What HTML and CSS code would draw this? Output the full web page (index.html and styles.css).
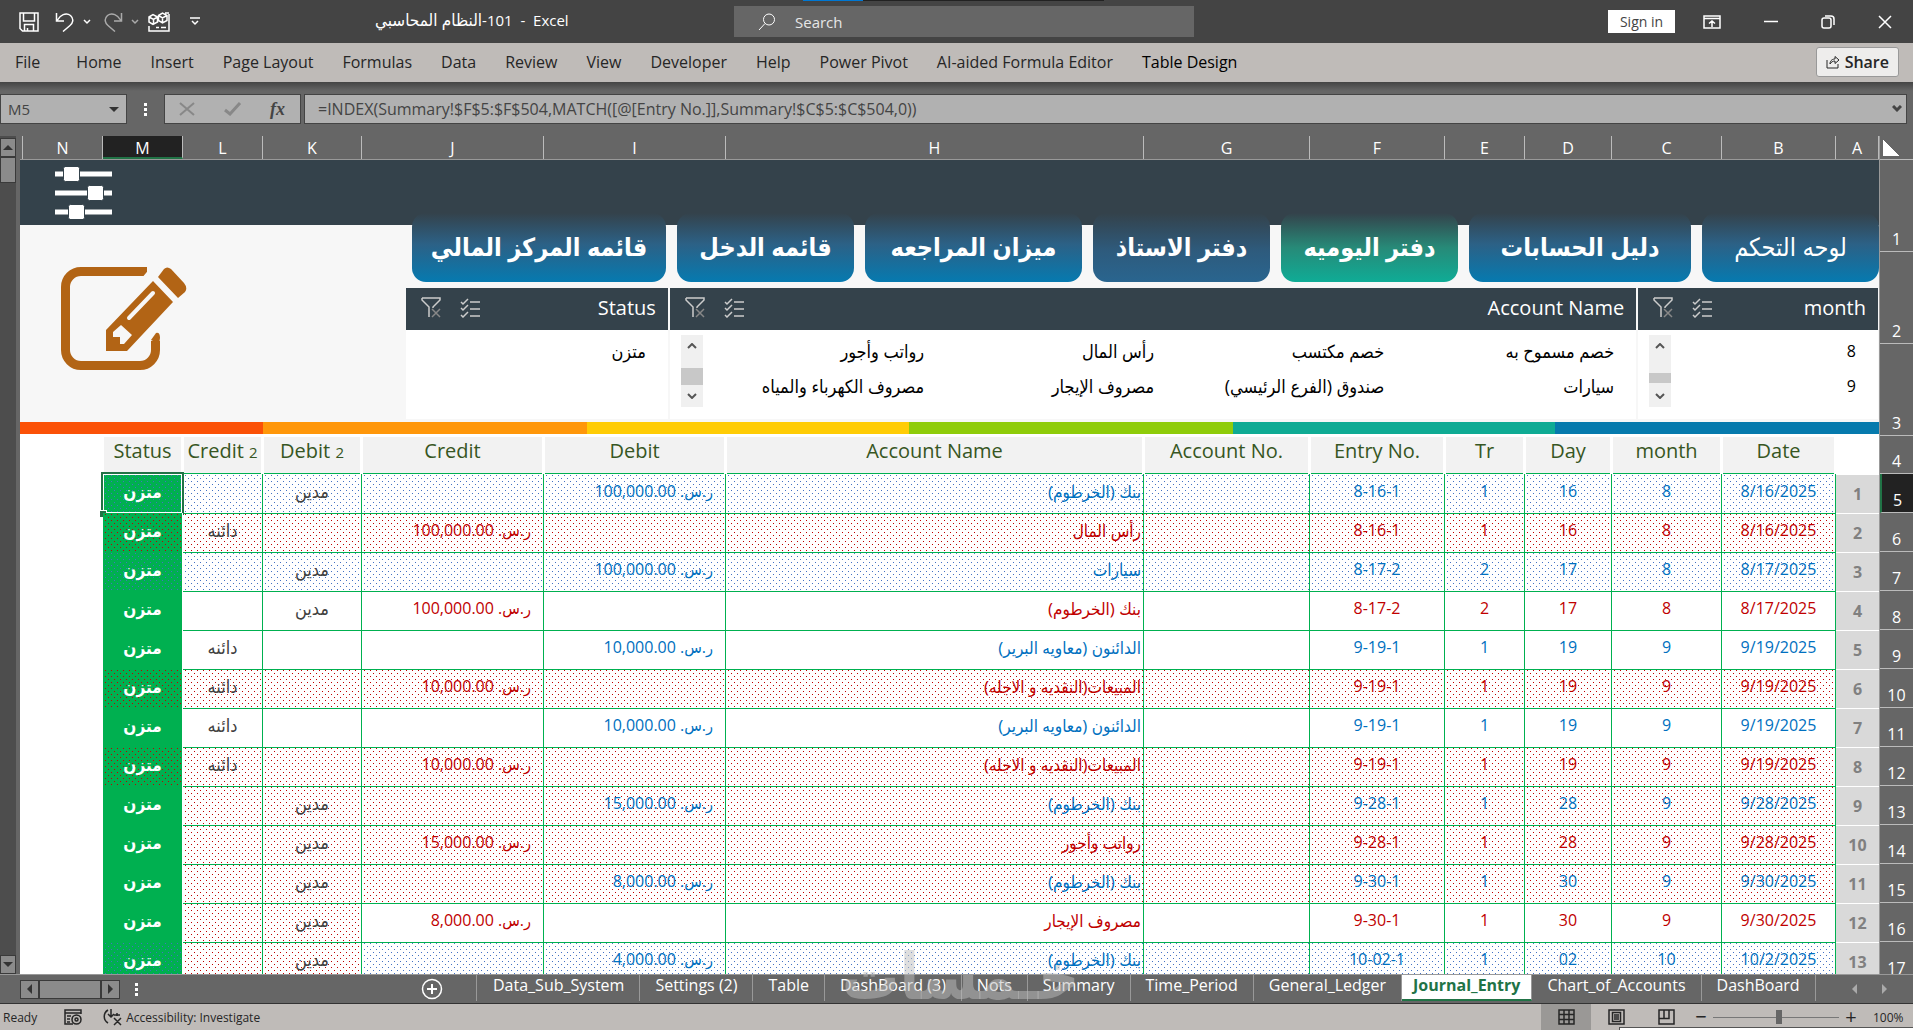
FILE: index.html
```
<!DOCTYPE html>
<html lang="en">
<head>
  <meta charset="utf-8">
  <title>101-النظام المحاسبي - Excel</title>
  <link rel="stylesheet" href="styles.css">
</head>
<body>

<header class="titlebar">
  <div class="quick">
    <button aria-label="Save"><svg width="20" height="20" viewBox="0 0 20 20"><path d="M1 1h18v18H3.500l-2.500-2.500zM4.500 1v8h11V1M5.500 19v-6.500h9V19M8.500 16v3"/></svg></button>
    <button class="undo" aria-label="Undo"><svg width="20" height="20" viewBox="0 0 20 20"><path d="M1.500 1v8H9M2 8.500C5 3 11 0 15.500 3.500c4 3.500 2 8-.5 10L8 19.500"/></svg></button>
    <button class="arrow" aria-label="Undo list"><svg width="8" height="6" viewBox="0 0 8 6"><path d="M1 1l3 3 3-3"/></svg></button>
    <button class="redo dim" aria-label="Redo"><svg width="20" height="20" viewBox="0 0 20 20"><path d="M18.500 1v8H11M18 8.500C15 3 9 0 4.500 3.500c-4 3.500-2 8 .5 10l7 6"/></svg></button>
    <button class="arrow dim" aria-label="Redo list"><svg width="8" height="6" viewBox="0 0 8 6"><path d="M1 1l3 3 3-3"/></svg></button>
    <button class="cubes" aria-label="Data model"><svg width="22" height="20" viewBox="0 0 22 20"><path d="M1 14v5h20V2M17 1h4M1 5l4-2.500L9.500 5v5L5 12.500 1 10zM1 5l4.500 2.500L9.500 5M5.500 7.500v5M10.500 3.500L14.500 1 19 3.500v5L14.500 11l-4-2.500zM10.500 3.500L14.500 6 19 3.500M14.500 6v5M8 15.500h3m2 0h5"/></svg></button>
    <button class="custom" aria-label="Customize"><svg width="10" height="9" viewBox="0 0 10 9"><path d="M0 1h10M2 4l3 3 3-3"/></svg></button>
  </div>
  <h1 class="doc"><bdi>النظام المحاسبي</bdi>-101&nbsp; - &nbsp;Excel</h1>
  <label class="search">
    <svg width="18" height="18" viewBox="0 0 18 18"><circle cx="11" cy="6.500" r="5.500"/><path d="M7 10.500L1 17"/></svg>
    <input type="text" placeholder="Search" aria-label="Search">
  </label>
  <div class="wincontrols">
    <button class="signin">Sign in</button>
    <button aria-label="Ribbon display options"><svg width="18" height="14" viewBox="0 0 18 14"><path d="M1 1h16v12H1zM1 3.500h16M9 12V6M6 8.500L9 6l3 2.500"/></svg></button>
    <button aria-label="Minimize"><svg width="14" height="14" viewBox="0 0 14 14"><path d="M0 6.500h14"/></svg></button>
    <button aria-label="Restore"><svg width="14" height="14" viewBox="0 0 14 14"><rect x="1" y="3" width="9" height="10" rx="2"/><path d="M4 1h6q3 0 3 3v6"/></svg></button>
    <button aria-label="Close"><svg width="14" height="14" viewBox="0 0 14 14"><path d="M1 1l12 12M13 1L1 13"/></svg></button>
  </div>
  <div class="topedge"></div>
</header>

<nav class="ribbon">
  <a href="#" class="file">File</a>
  <a href="#">Home</a>
  <a href="#">Insert</a>
  <a href="#">Page Layout</a>
  <a href="#">Formulas</a>
  <a href="#">Data</a>
  <a href="#">Review</a>
  <a href="#">View</a>
  <a href="#">Developer</a>
  <a href="#">Help</a>
  <a href="#">Power Pivot</a>
  <a href="#">AI-aided Formula Editor</a>
  <a href="#" class="context">Table Design</a>
  <button class="share"><svg width="14" height="14" viewBox="0 0 14 14"><path d="M1 5v8h11V9M4 9c0-4 3-5 5-5V1.500L13 5 9 8.500V6C7 6 5 7 4 9z"/></svg>Share</button>
</nav>

<section class="formulabar">
  <div class="namebox"><input type="text" value="M5" aria-label="Name box"><i class="tri down"></i></div>
  <i class="grip"></i>
  <div class="fxbuttons">
    <button aria-label="Cancel"><svg width="16" height="14" viewBox="0 0 16 14"><path d="M1 1l14 12M15 1L1 13"/></svg></button>
    <button aria-label="Enter"><svg width="18" height="14" viewBox="0 0 18 14"><path d="M1 8l5 4L16 1" stroke-width="3"/></svg></button>
    <button class="fx" aria-label="Insert function">fx</button>
  </div>
  <div class="formula"><input type="text" value="=INDEX(Summary!$F$5:$F$504,MATCH([@[Entry No.]],Summary!$C$5:$C$504,0))" aria-label="Formula"><svg width="10" height="8" viewBox="0 0 10 8"><path d="M1 1l4 4 4-4"/></svg></div>
</section>

<main class="work">
  <div class="vscroll">
    <button aria-label="Scroll up"><i class="tri up"></i></button>
    <div class="thumb"></div>
    <button class="last" aria-label="Scroll down"><i class="tri down"></i></button>
  </div>

  <div class="sheet">
    <div class="letters cols">
      <span>N</span><span class="on">M</span><span>L</span><span>K</span><span>J</span><span>I</span><span>H</span><span>G</span><span>F</span><span>E</span><span>D</span><span>C</span><span>B</span><span>A</span>
    </div>

    <div class="dash">
      <div class="brand">
        <svg class="sliders" width="57" height="52" viewBox="0 0 57 52">
          <path d="M0 7h57M0 26h57M0 45h57" stroke="#fff" stroke-width="5"/>
          <g fill="#fff" stroke="#34424b" stroke-width="1"><rect x="8.500" y="-.5" width="16" height="15" rx="2"/><rect x="32.500" y="18.500" width="16" height="15" rx="2"/><rect x="13.500" y="37.500" width="16" height="15" rx="2"/></g>
        </svg>
        <svg class="pencil" width="126" height="104" viewBox="0 0 126 104">
          <path d="M86 4.500H20A15.500 15.500 0 0 0 4.500 20V83A15.500 15.500 0 0 0 20 98.500H79A15.500 15.500 0 0 0 94.500 83V70" fill="none" stroke="#b26415" stroke-width="9"/>
          <path d="M80 12l10-12h8l-8 9zM86 74l13-15v15z" fill="#f7f7f7"/>
          <path d="M90 73l5-7q4-1 4 5l-1 6z" fill="#b26415"/>
          <path d="M92 14l20 21-46 49H45V63zM97 10l6-8q3-3 7 0l13 14q4 5 1 9l-7 6z" fill="#b26415"/>
          <path d="M92 26L68 51" stroke="#f7f7f7" stroke-width="4" stroke-linecap="round"/>
          <path d="M60 58l11 10-8 9h-4v-7h-7v-5z" fill="#f7f7f7"/>
        </svg>
      </div>
      <div class="board">
        <nav class="pages" lang="ar">
          <a href="#" class="w254">قائمه المركز المالي</a>
          <a href="#" class="w177">قائمه الدخل</a>
          <a href="#" class="w217">ميزان المراجعه</a>
          <a href="#" class="w177 steel">دفتر الاستاذ</a>
          <a href="#" class="w177 current">دفتر اليوميه</a>
          <a href="#" class="w222">دليل الحسابات</a>
          <a href="#" class="w177 light">لوحه التحكم</a>
        </nav>
        <div class="slicers">
          <section class="slicer status">
            <h2><svg width="20" height="21" viewBox="0 0 20 21"><path d="M1 1h18v2l-7 7v1M1 1v2l7 7v10"/><path d="M11 12l8 8M19 12l-8 8" class="x"/></svg><svg width="20" height="20" viewBox="0 0 20 20"><path d="M1 4l2 2 5-5M1 10l2 2 5-5M1 17l2 2 5-5M10 4h10M10 11h10M10 18h10"/></svg><span>Status</span></h2>
            <div class="items"><ul lang="ar"><li>متزن</li></ul></div>
          </section>
          <section class="slicer account">
            <h2><svg width="20" height="21" viewBox="0 0 20 21"><path d="M1 1h18v2l-7 7v1M1 1v2l7 7v10"/><path d="M11 12l8 8M19 12l-8 8" class="x"/></svg><svg width="20" height="20" viewBox="0 0 20 20"><path d="M1 4l2 2 5-5M1 10l2 2 5-5M1 17l2 2 5-5M10 4h10M10 11h10M10 18h10"/></svg><span>Account Name</span></h2>
            <div class="items">
              <div class="bar"><svg width="10" height="6" viewBox="0 0 10 6"><path d="M1 5l4-4 4 4"/></svg><i></i><svg width="10" height="6" viewBox="0 0 10 6"><path d="M1 1l4 4 4-4"/></svg></div>
              <ul lang="ar"><li>رواتب وأجور</li><li>رأس المال</li><li>خصم مكتسب</li><li>خصم مسموح به</li><li>مصروف الكهرباء والمياه</li><li>مصروف الإيجار</li><li>صندوق (الفرع الرئيسي)</li><li>سيارات</li></ul>
            </div>
          </section>
          <section class="slicer month">
            <h2><svg width="20" height="21" viewBox="0 0 20 21"><path d="M1 1h18v2l-7 7v1M1 1v2l7 7v10"/><path d="M11 12l8 8M19 12l-8 8" class="x"/></svg><svg width="20" height="20" viewBox="0 0 20 20"><path d="M1 4l2 2 5-5M1 10l2 2 5-5M1 17l2 2 5-5M10 4h10M10 11h10M10 18h10"/></svg><span>month</span></h2>
            <div class="items">
              <div class="bar"><svg width="10" height="6" viewBox="0 0 10 6"><path d="M1 5l4-4 4 4"/></svg><i></i><svg width="10" height="6" viewBox="0 0 10 6"><path d="M1 1l4 4 4-4"/></svg></div>
              <ul><li>8</li><li>9</li></ul>
            </div>
          </section>
        </div>
      </div>
    </div>
    <div class="rainbow"><i></i><i></i><i></i><i></i><i></i><i></i></div>

    <table class="journal">
      <thead>
        <tr class="cols"><td></td><th>Status</th><th>Credit <small>2</small></th><th>Debit <small>2</small></th><th>Credit</th><th>Debit</th><th>Account Name</th><th>Account No.</th><th>Entry No.</th><th>Tr</th><th>Day</th><th>month</th><th>Date</th><td></td></tr>
      </thead>
      <tbody>
        <tr class="cols debit dotblue"><td></td><td class="ok selected">متزن</td><td></td><td>مدين</td><td></td><td>ر.س. 100,000.00</td><td>بنك (الخرطوم)</td><td></td><td>8-16-1</td><td>1</td><td>16</td><td>8</td><td>8/16/2025</td><th>1</th></tr>
        <tr class="cols credit dotred"><td></td><td class="ok">متزن</td><td>دائنه</td><td></td><td>ر.س. 100,000.00</td><td></td><td>رأس المال</td><td></td><td>8-16-1</td><td>1</td><td>16</td><td>8</td><td>8/16/2025</td><th>2</th></tr>
        <tr class="cols debit dotblue"><td></td><td class="ok">متزن</td><td></td><td>مدين</td><td></td><td>ر.س. 100,000.00</td><td>سيارات</td><td></td><td>8-17-2</td><td>2</td><td>17</td><td>8</td><td>8/17/2025</td><th>3</th></tr>
        <tr class="cols credit"><td></td><td class="ok">متزن</td><td></td><td>مدين</td><td>ر.س. 100,000.00</td><td></td><td>بنك (الخرطوم)</td><td></td><td>8-17-2</td><td>2</td><td>17</td><td>8</td><td>8/17/2025</td><th>4</th></tr>
        <tr class="cols debit"><td></td><td class="ok">متزن</td><td>دائنه</td><td></td><td></td><td>ر.س. 10,000.00</td><td>الدائنون (معاويه البرير)</td><td></td><td>9-19-1</td><td>1</td><td>19</td><td>9</td><td>9/19/2025</td><th>5</th></tr>
        <tr class="cols credit dotred"><td></td><td class="ok">متزن</td><td>دائنه</td><td></td><td>ر.س. 10,000.00</td><td></td><td>المبيعات(النقديه و الاجله)</td><td></td><td>9-19-1</td><td>1</td><td>19</td><td>9</td><td>9/19/2025</td><th>6</th></tr>
        <tr class="cols debit"><td></td><td class="ok">متزن</td><td>دائنه</td><td></td><td></td><td>ر.س. 10,000.00</td><td>الدائنون (معاويه البرير)</td><td></td><td>9-19-1</td><td>1</td><td>19</td><td>9</td><td>9/19/2025</td><th>7</th></tr>
        <tr class="cols credit dotred"><td></td><td class="ok">متزن</td><td>دائنه</td><td></td><td>ر.س. 10,000.00</td><td></td><td>المبيعات(النقديه و الاجله)</td><td></td><td>9-19-1</td><td>1</td><td>19</td><td>9</td><td>9/19/2025</td><th>8</th></tr>
        <tr class="cols debit dotred"><td></td><td class="ok plain">متزن</td><td></td><td>مدين</td><td></td><td>ر.س. 15,000.00</td><td>بنك (الخرطوم)</td><td></td><td>9-28-1</td><td>1</td><td>28</td><td>9</td><td>9/28/2025</td><th>9</th></tr>
        <tr class="cols credit dotred"><td></td><td class="ok plain">متزن</td><td></td><td>مدين</td><td>ر.س. 15,000.00</td><td></td><td>رواتب وأجور</td><td></td><td>9-28-1</td><td>1</td><td>28</td><td>9</td><td>9/28/2025</td><th>10</th></tr>
        <tr class="cols debit dotred"><td></td><td class="ok plain">متزن</td><td></td><td>مدين</td><td></td><td>ر.س. 8,000.00</td><td>بنك (الخرطوم)</td><td></td><td>9-30-1</td><td>1</td><td>30</td><td>9</td><td>9/30/2025</td><th>11</th></tr>
        <tr class="cols credit"><td></td><td class="ok">متزن</td><td class="red"></td><td class="red">مدين</td><td>ر.س. 8,000.00</td><td></td><td>مصروف الإيجار</td><td></td><td>9-30-1</td><td>1</td><td>30</td><td>9</td><td>9/30/2025</td><th>12</th></tr>
        <tr class="cols debit dotblue"><td></td><td class="ok">متزن</td><td class="red"></td><td class="red">مدين</td><td></td><td>ر.س. 4,000.00</td><td>بنك (الخرطوم)</td><td></td><td>10-02-1</td><td>1</td><td>02</td><td>10</td><td>10/2/2025</td><th>13</th></tr>
      </tbody>
    </table>
  </div>

  <div class="rownums">
    <span class="corner"></span>
    <span class="tall">1</span><span class="tall">2</span><span class="tall">3</span><span class="head">4</span><span class="on">5</span><span>6</span><span>7</span><span>8</span><span>9</span><span>10</span><span>11</span><span>12</span><span>13</span><span>14</span><span>15</span><span>16</span><span>17</span>
  </div>
</main>

<footer>
  <div class="tabs">
    <div class="hscroll"><button aria-label="Scroll left"><i class="tri left"></i></button><div class="thumb"></div><button aria-label="Scroll right"><i class="tri right"></i></button></div>
    <i class="grip"></i>
    <button class="add" aria-label="New sheet"><svg width="22" height="22" viewBox="0 0 22 22"><circle cx="11" cy="11" r="9.500"/><path d="M11 6v10M6 11h10" stroke-width="2"/></svg></button>
    <nav>
      <a href="#">Data_Sub_System</a><a href="#">Settings (2)</a><a href="#">Table</a><a href="#">DashBoard (3)</a><a href="#">Nots</a><a href="#">Summary</a><a href="#">Time_Period</a><a href="#">General_Ledger</a><a href="#" class="active">Journal_Entry</a><a href="#">Chart_of_Accounts</a><a href="#">DashBoard</a>
    </nav>
    <div class="steps"><i class="tri left"></i><i class="tri right"></i></div>
    <div class="mark" lang="ar">خـمسات</div>
  </div>
  <div class="statusbar">
    <span class="ready">Ready</span>
    <svg width="18" height="16" viewBox="0 0 18 16"><path d="M9 15H1V1h16v4M1 4h16M3 7h4M3 10h3M3 13h3"/><circle cx="12.500" cy="10.500" r="4.500"/><circle cx="12.500" cy="10.500" r="1.500"/></svg>
    <svg class="acc" width="20" height="17" viewBox="0 0 20 17"><path d="M5 1C0 4 0 11 5 14M8 0v7M5 5l3 3 3-3M14 4v3M11 6h6M11 9l7 7M18 9l-7 7"/></svg>
    <span>Accessibility: Investigate</span>
    <div class="views">
      <button class="on" aria-label="Normal"><svg width="17" height="16" viewBox="0 0 17 16"><path d="M1 1h15v14H1zM6 1v14M11 1v14M1 5.500h15M1 10.500h15"/></svg></button>
      <button aria-label="Page layout"><svg width="17" height="16" viewBox="0 0 17 16"><path d="M1 1h15v14H1zM4.500 3.500h8v9h-8zM6 6h5M6 8h5M6 10h5"/></svg></button>
      <button aria-label="Page break preview"><svg width="17" height="16" viewBox="0 0 17 16"><path d="M1 1h15v14H1zM1 9.500h10V1M6 1v8"/></svg></button>
    </div>
    <div class="zoom"><button aria-label="Zoom out">−</button><input type="range" min="10" max="190" value="105" aria-label="Zoom"><button aria-label="Zoom in">+</button><output>100%</output></div>
    <div class="popup"></div>
  </div>
</footer>

</body>
</html>
```

FILE: styles.css
```
*{
  box-sizing: border-box;
}
body{
  margin: 0;
  height: 100vh;
  display: flex;
  flex-direction: column;
  overflow: hidden;
  background: #666;
  color: #262626;
  font-family: "Open Sans", "DejaVu Sans Condensed", "DejaVu Sans", sans-serif;
  font-size: 16px;
}
a{
  color: inherit;
  text-decoration: none;
}
button, input{
  font: inherit;
  color: inherit;
  background: none;
  border: 0;
  padding: 0;
  margin: 0;
  outline: none;
}
h1, h2, ul{
  margin: 0;
  padding: 0;
  font-weight: normal;
  list-style: none;
}
svg{
  display: block;
  flex: none;
  fill: none;
  stroke: currentColor;
  stroke-width: 1.5;
}
.pencil, .sliders{
  stroke: none;
}

/* small shared pieces */
.tri{
  display: block;
  border: 5px solid transparent;
}
.tri.up{ border-bottom-color: #333; border-top: 0; }
.tri.down{ border-top-color: #333; border-bottom: 0; }
.tri.left{ border-right-color: #333; border-left: 0; }
.tri.right{ border-left-color: #333; border-right: 0; }
.grip{
  width: 3px;
  height: 13px;
  background: repeating-linear-gradient(#fff 0 3px, transparent 3px 5px);
}

/* title bar */
.titlebar{
  position: relative;
  flex: none;
  height: 43px;
  display: flex;
  align-items: center;
  background: #444;
  color: #fff;
}
.topedge{
  position: absolute;
  top: 0;
  left: 42%;
  width: 301px;
  height: 1px;
  background: linear-gradient(90deg, #0078d4 60px, #222 0);
}
.quick{
  display: flex;
  align-items: center;
  padding-left: 19px;
  width: 375px;
}
.quick .undo{ margin-left: 16px; }
.quick .arrow{ margin-left: 8px; }
.quick .redo{ margin-left: 12px; }
.quick .cubes{ margin-left: 9px; }
.quick .custom{ margin-left: 20px; }
.quick .dim{ color: #aaa; }
.doc{
  width: 359px;
  padding-bottom: 4px;
  font-size: 15px;
  white-space: nowrap;
}
.doc bdi{ font-size: 17px; }
.search{
  display: flex;
  align-items: center;
  width: 460px;
  height: 31px;
  padding-left: 24px;
  gap: 19px;
  background: #666;
  font-size: 15px;
}
.search svg{ stroke-width: 1; }
.search input::placeholder{
  color: #e6e6e6;
  opacity: 1;
}
.wincontrols{
  margin-left: auto;
  display: flex;
  align-items: center;
  gap: 43px;
  padding-right: 21px;
}
.wincontrols .signin{
  width: 67px;
  height: 23px;
  margin-right: -15px;
  background: #fff;
  color: #444;
  font-size: 14px;
  line-height: 22px;
}

/* ribbon */
.ribbon{
  flex: none;
  display: flex;
  align-items: center;
  gap: 29px;
  height: 39px;
  padding: 0 14px 1px 15px;
  background: #bfbbb8;
  white-space: nowrap;
}
.ribbon .file{ margin-right: 7px; }
.ribbon .context{ color: #000; }
.share{
  margin-left: auto;
  display: flex;
  align-items: center;
  gap: 5px;
  height: 30px;
  padding: 0 9px;
  border: 1px solid #999;
  border-radius: 3px;
  background: #eeedec;
  font-weight: 600;
}
.share svg{ stroke-width: 1; }

/* formula bar */
.formulabar{
  flex: none;
  display: flex;
  align-items: center;
  height: 54px;
  padding: 12px 6px;
  padding-left: 0;
  background: linear-gradient(#444, #666 9px);
  color: #444;
}
.namebox, .fxbuttons, .formula{
  display: flex;
  align-items: center;
  height: 30px;
  border: 1px solid #444;
  background: #b1b1b1;
}
.namebox{
  width: 127px;
  padding: 0 7px;
}
.namebox input{
  width: 100%;
  font-size: 15px;
}
.formulabar .grip{ margin: 0 17px; }
.fxbuttons{
  width: 137px;
  padding: 0 15px 0 14px;
  justify-content: space-between;
  margin-right: 3px;
}
.fxbuttons svg{
  color: #888;
  stroke-width: 2;
}
.fxbuttons .fx{
  font: italic bold 18px "Liberation Serif", serif;
}
.formula{
  flex: 1;
  padding: 0 4px 0 13px;
}
.formula input{ flex: 1; }
.formula svg{ stroke-width: 3; }

/* work area */
.work{
  flex: 1;
  min-height: 0;
  display: grid;
  grid-template-columns: 20px minmax(0, 1fr) 33px;
  overflow: hidden;
}
.vscroll{
  display: flex;
  flex-direction: column;
  width: 16px;
  padding-top: 2px;
  background: #4d4d4d;
}
.vscroll button, .hscroll button, .hscroll .thumb, .vscroll .thumb{
  display: flex;
  flex: none;
  align-items: center;
  justify-content: center;
  border: 1px solid #3a3a3a;
  background: #8b8b8b;
}
.vscroll button{ height: 19px; }
.vscroll .thumb{ height: 26px; }
.vscroll .last{ margin-top: auto; }
.sheet{
  min-height: 0;
  overflow: hidden;
  background: #fff;
  border-right: 1px solid #999;
}
.cols{
  display: grid;
  grid-template-columns: 83fr 80fr 80fr 99fr 182fr 182fr 418fr 166fr 135fr 80fr 87fr 110fr 114fr 43fr;
}
.letters{
  height: 24px;
  background: #666;
  border-bottom: 1px solid #999;
  color: #fff;
  text-align: center;
  font-size: 16px;
  line-height: 24px;
}
.letters span{
  height: 23px;
  border-right: 1px solid #bbb;
}
.letters span:first-child{
  margin-left: 2px;
  border-left: 1px solid #bbb;
}
.letters .on{
  background: #222;
  border-bottom: 2px solid #217346;
}

/* dashboard banner */
.dash{
  display: flex;
  height: 262px;
  background: linear-gradient(#34424b 65px, #f7f7f7 0);
}
.brand{
  width: 386px;
  padding: 7px 0 0 35px;
}
.pencil{
  margin: 48px 0 0 6px;
}
.board{
  flex: 1;
  min-width: 0;
  padding-top: 53px;
}
.pages{
  display: flex;
  gap: 11px;
  padding-left: 6px;
  color: #fff;
  font-size: 25px;
  font-weight: bold;
}
.pages a{
  height: 69px;
  padding-top: 18px;
  border-radius: 14px;
  background: linear-gradient(#34424b, #2c6186 45%, #067ab0);
  text-align: center;
  line-height: 30px;
  white-space: nowrap;
}
.pages .w254{ flex: 254 0 0; }
.pages .w177{ flex: 177 0 0; }
.pages .w217{ flex: 217 0 0; }
.pages .w222{ flex: 222 0 0; }
.pages .steel{ background: linear-gradient(#34424b, #2e5b7d 55%, #29658f); }
.pages .current{ background: linear-gradient(#34424b, #278a78 50%, #0fac96); }
.pages .light{ font-weight: normal; }
.slicers{
  display: flex;
  gap: 2px;
  margin: 6px 1px 0 0;
}
.slicer{
  height: 131px;
  background: #fff;
}
.slicer.status{ flex: 262 0 0; }
.slicer.account{ flex: 967 0 0; }
.slicer.month{ flex: 240 0 0; }
.slicer h2{
  display: flex;
  align-items: center;
  gap: 19px;
  height: 42px;
  padding: 0 12px 3px 15px;
  background: #34424b;
  color: #fff;
  font-size: 20px;
}
.slicer h2 svg{ color: #ccc; }
.slicer h2 .x{ color: #888; stroke: #888; }
.slicer h2 span{ margin-left: auto; }
.items{
  display: flex;
  padding: 5px 22px 0 11px;
  color: #000;
}
.items ul{
  flex: 1;
  display: grid;
  grid-auto-rows: 35px;
  text-align: right;
  line-height: 33px;
  white-space: nowrap;
}
.items ul:lang(ar){
  font-size: 18px;
}
.account ul{
  grid-template-columns: repeat(4, 230px);
  justify-content: end;
  margin-left: -22px;
}
.bar{
  display: flex;
  flex-direction: column;
  align-items: center;
  justify-content: space-between;
  width: 22px;
  height: 72px;
  padding: 8px 0;
  background: #f0f0f0;
  color: #555;
}
.bar svg{ stroke-width: 2; }
.bar i{
  width: 22px;
  height: 17px;
  margin-top: 10px;
  background: #c8c8c8;
}
.month .bar i{
  height: 10px;
  margin-top: 14px;
}
.rainbow{
  display: grid;
  grid-template-columns: 243fr 324fr 322fr 324fr 322fr 324fr;
  height: 12px;
}
.rainbow i:nth-child(1){ background: #fb5107; }
.rainbow i:nth-child(2){ background: #ff970a; }
.rainbow i:nth-child(3){ background: #ffcc05; }
.rainbow i:nth-child(4){ background: #8fcc0a; }
.rainbow i:nth-child(5){ background: #0fab94; }
.rainbow i:nth-child(6){ background: #067aad; }

/* journal table */
.journal, .journal thead, .journal tbody{
  display: block;
}
.journal thead tr{ height: 40px; }
.journal thead th{
  margin: 3px 2px 0 1px;
  border-bottom: 1px solid #00b050;
  background: #f2f2f2;
  color: #375623;
  font-size: 20px;
  font-weight: normal;
  line-height: 27px;
  white-space: nowrap;
  padding: 0;
}
.journal small{ font-size: 15px; }
.journal tbody tr{ height: 39px; }
.journal tbody td{
  padding: 0;
  border-right: 1px solid #00b050;
  border-bottom: 1px solid #00b050;
  text-align: center;
  line-height: 35px;
  white-space: nowrap;
}
.journal tbody td:first-child{ border: 0; }
.journal tbody td:nth-child(3), .journal tbody td:nth-child(4){
  color: #404040;
  font-size: 18px;
}
.journal tbody td:nth-child(5), .journal tbody td:nth-child(6){
  direction: rtl;
  text-align: right;
  padding-right: 12px;
}
.journal tbody td:nth-child(7){
  direction: rtl;
  text-align: right;
  padding-right: 2px;
  font-size: 17px;
}
.debit{ color: #0070c0; }
.credit{ color: #c00000; }
.dotblue{ --dot: #4472c4; }
.dotred, .red{ --dot: #c00000; }
.dotblue td:not(:first-child), .dotred td:not(:first-child), .journal .red{
  background-image:
    conic-gradient(from 270deg at 1px 1px, var(--dot) 90deg, transparent 0),
    conic-gradient(from 270deg at 1px 1px, var(--dot) 90deg, transparent 0);
  background-size: 6px 6px;
  background-position: 2px 1px, 5px 4px;
}
.journal tbody .ok{
  position: relative;
  background-color: #00b050;
  border-color: #fff;
  color: #fff;
  font-size: 17px;
  font-weight: bold;
}
.journal tbody .plain{ background-image: none; }
.selected::before{
  content: "";
  position: absolute;
  inset: -2px;
  border: 2px solid #217346;
  box-shadow: inset 0 0 0 1px #fff;
}
.selected::after{
  content: "";
  position: absolute;
  left: -3px;
  bottom: -4px;
  width: 6px;
  height: 6px;
  border: 1px solid #fff;
  border-width: 1px 1px 0 0;
  background: #217346;
}
.journal tbody th{
  border-top: 1px solid #fff;
  border-bottom: 1px solid #fff;
  background: #d9d9d9;
  color: #808080;
  padding: 0;
  line-height: 38px;
  text-align: center;
}

/* row numbers */
.rownums{
  display: flex;
  flex-direction: column;
  overflow: hidden;
  color: #fff;
  font-size: 16px;
}
.rownums span{
  flex: none;
  display: flex;
  align-items: flex-end;
  justify-content: center;
  height: 39px;
  border-bottom: 1px solid #bbb;
  line-height: 24px;
}
.rownums .corner{
  height: 24px;
  background: linear-gradient(to top right, #fff 50%, transparent 51%) 3px 4px / 16px 16px no-repeat;
}
.rownums .tall{ height: 92px; }
.rownums .head{ height: 38px; }
.rownums .on{
  background: #222;
  border-left: 2px solid #217346;
}

/* sheet tabs */
.tabs{
  position: relative;
  display: flex;
  align-items: center;
  height: 30px;
  border-top: 1px solid #999;
  border-bottom: 1px solid #333;
  color: #fff;
}
.hscroll{
  display: flex;
  height: 19px;
  margin-left: 20px;
}
.hscroll button{ width: 19px; }
.hscroll .thumb{ width: 62px; }
.tabs .grip{ margin: 0 283px 0 15px; }
.add svg{ stroke-width: 1.5; }
.tabs nav{
  display: flex;
  align-self: stretch;
  margin-left: 33px;
  font-size: 16px;
  line-height: 21px;
  white-space: nowrap;
}
.tabs nav a{
  padding: 0 15px;
  border-right: 1px solid #999;
  height: 26px;
}
.tabs nav a:first-child{
  padding-left: 16px;
  border-left: 1px solid #999;
}
.tabs nav .active{
  border-bottom: 2px solid #217346;
  background: #fff;
  color: #217346;
  font-weight: bold;
  padding: 0 11px;
}
.steps{
  display: flex;
  gap: 25px;
  margin: 0 26px 0 auto;
}
.steps .left{ border-right-color: #aaa; }
.steps .right{ border-left-color: #aaa; }
.mark{
  position: absolute;
  left: 44%;
  top: -30px;
  color: rgba(190, 190, 190, .5);
  font-size: 64px;
  font-weight: bold;
  line-height: 60px;
}

/* status bar */
.statusbar{
  position: relative;
  display: flex;
  align-items: center;
  height: 26px;
  padding-left: 3px;
  background: #bfbbb8;
  font-size: 12px;
}
.ready{ margin-right: 27px; }
.statusbar .acc{ margin: 0 3px 0 21px; }
.statusbar svg{ stroke-width: 1.5; }
.views{
  display: flex;
  align-self: stretch;
  margin-left: auto;
}
.views button{
  display: flex;
  align-items: center;
  justify-content: center;
  width: 50px;
}
.views .on{ background: #9a9896; }
.zoom{
  display: flex;
  align-items: center;
}
.zoom button{
  width: 20px;
  font-size: 20px;
  line-height: 20px;
}
.zoom input{
  appearance: none;
  width: 126px;
  height: 14px;
  margin: 0 2px;
  background: linear-gradient(#777, #777) center / 100% 1px no-repeat;
}
.zoom input::-webkit-slider-thumb{
  appearance: none;
  width: 6px;
  height: 14px;
  background: #666;
}
.zoom output{
  width: 52px;
  padding-left: 12px;
}
.popup{
  position: absolute;
  right: 0;
  bottom: 0;
  width: 294px;
  height: 3px;
  border: 1px solid #555;
  border-width: 1px 0 0 1px;
  background: #fff;
}
```
